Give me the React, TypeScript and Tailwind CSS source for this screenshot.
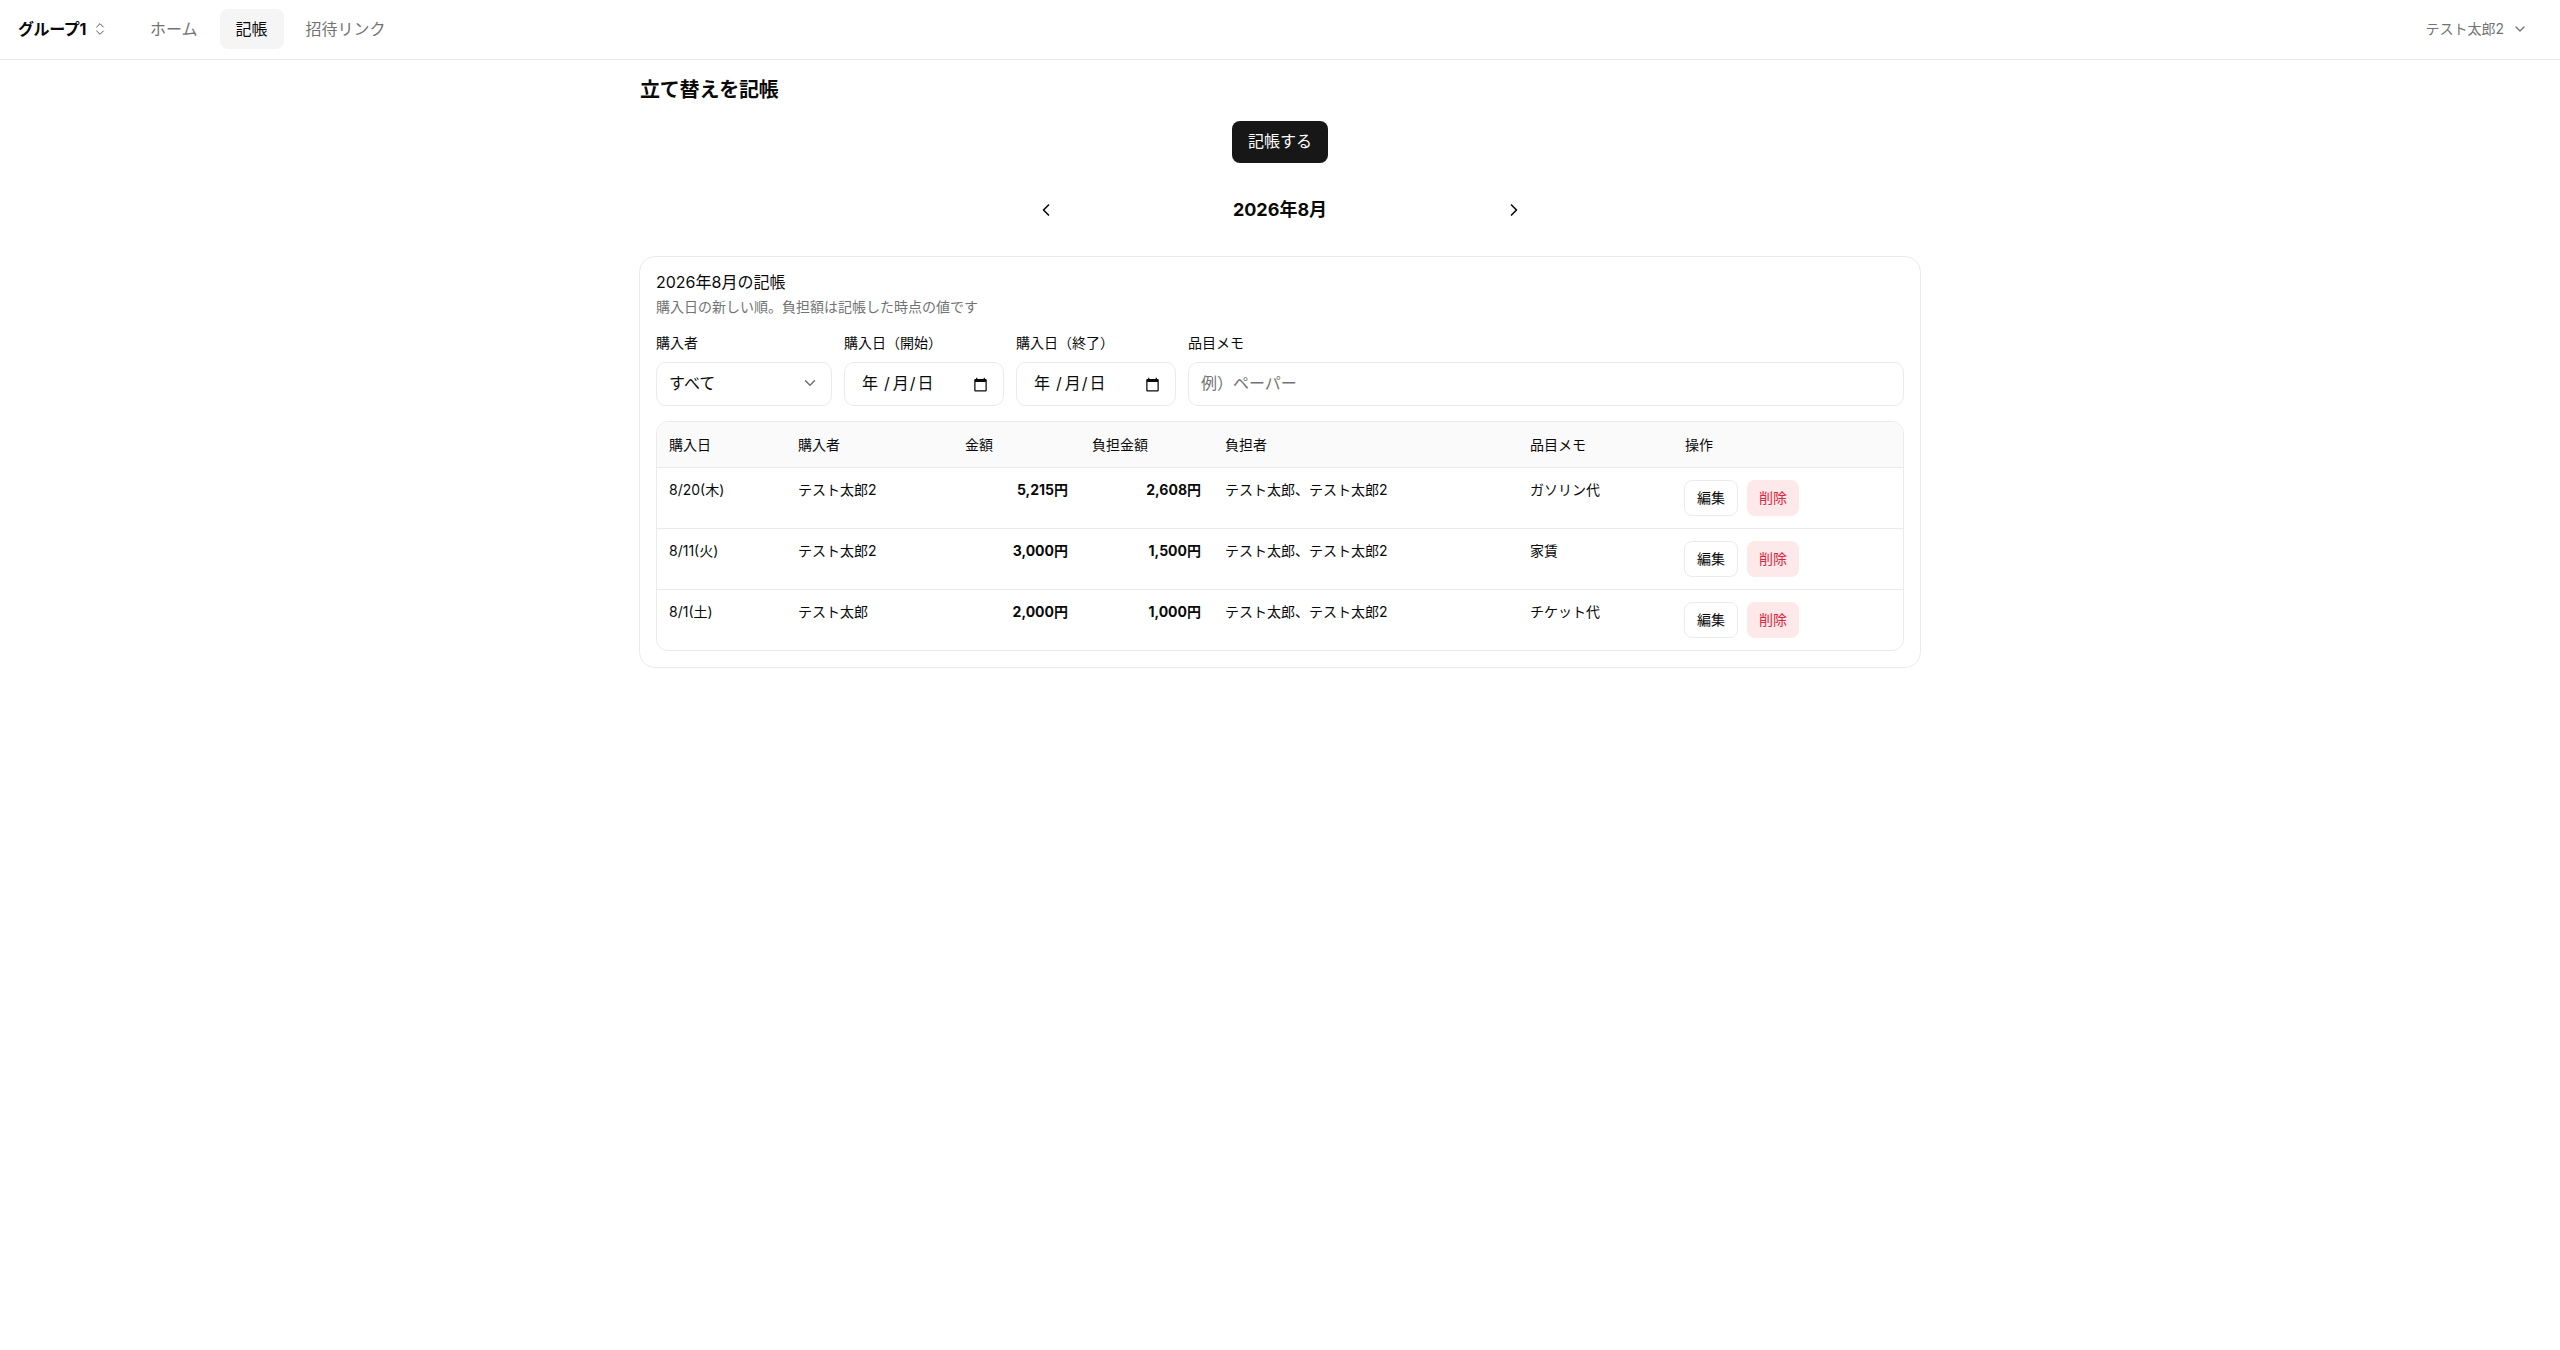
import { ChevronDown, ChevronLeft, ChevronRight, ChevronsUpDown } from 'lucide-react';

const rows = [
  { date: '8/20(木)', buyer: 'テスト太郎2', amount: '5,215円', share: '2,608円', payers: 'テスト太郎、テスト太郎2', memo: 'ガソリン代' },
  { date: '8/11(火)', buyer: 'テスト太郎2', amount: '3,000円', share: '1,500円', payers: 'テスト太郎、テスト太郎2', memo: '家賃' },
  { date: '8/1(土)', buyer: 'テスト太郎', amount: '2,000円', share: '1,000円', payers: 'テスト太郎、テスト太郎2', memo: 'チケット代' },
];

// same shape as the browser's native date picker icon
function CalendarIcon() {
  return (
    <svg width="15" height="15" viewBox="0 0 24 24" fill="currentColor">
      <path d="M20 3h-1V1h-2v2H7V1H5v2H4c-1.1 0-2 .9-2 2v16c0 1.1.9 2 2 2h16c1.1 0 2-.9 2-2V5c0-1.1-.9-2-2-2zm0 18H4V8h16v13z" />
    </svg>
  );
}

function DateBox({ label }: { label: string }) {
  return (
    <div className="flex flex-col gap-[10px] w-40">
      <div className="text-sm leading-[18px]">{label}</div>
      <div className="h-11 pl-[17px] pr-[15px] border border-[#ebebeb] rounded-[10px] flex items-center justify-between text-base">
        <div className="flex items-center pb-[2px]">
          <span>年</span>
          <span className="ml-[6px]">/</span>
          <span className="ml-[3px]">月</span>
          <span className="ml-[1px]">/</span>
          <span className="ml-[2px]">日</span>
        </div>
        <CalendarIcon />
      </div>
    </div>
  );
}

export default function App() {
  return (
    <div className="min-h-[1350px] bg-white text-[#0a0a0a] font-['Inter','Noto_Sans_CJK_JP',sans-serif]">
      <header className="h-[60px] pb-[2px] border-b border-[#e8e8e8] flex items-center justify-between pl-[18px] pr-[32px]">
        <div className="flex items-center">
          <div className="flex items-center gap-[6px] text-base font-bold tracking-[-0.4px] w-[116px]">
            グループ1 <ChevronsUpDown size={16} strokeWidth={1.5} className="text-[#525252]" />
          </div>
          <nav className="flex items-center gap-[6px] text-base text-[#737373]">
            <div className="px-4 h-10 flex items-center">ホーム</div>
            <div className="px-4 h-10 flex items-center bg-[#f5f5f5] rounded-lg text-[#0a0a0a]">記帳</div>
            <div className="px-4 h-10 flex items-center">招待リンク</div>
          </nav>
        </div>
        <div className="flex items-center gap-2 text-sm text-[#737373]">
          テスト太郎2 <ChevronDown size={16} />
        </div>
      </header>

      <main className="w-[1282px] mx-auto">
        <h1 className="text-xl font-bold mt-[16px] ml-px leading-7 tracking-[-0.2px]">立て替えを記帳</h1>
        <div className="flex justify-center mt-[17px]">
          <button className="h-[42px] w-24 bg-[#171717] text-white rounded-lg text-base pb-[2px]">記帳する</button>
        </div>
        <div className="flex items-center justify-between w-[496px] mx-auto mt-[27px] h-10 px-1">
          <ChevronLeft size={20} />
          <div className="text-lg font-bold">2026年8月</div>
          <ChevronRight size={20} />
        </div>
        <section className="mt-[26px] border border-[#ebebeb] rounded-2xl pt-[13px] px-4 pb-4">
          <div className="text-base leading-[25px]">2026年8月の記帳</div>
          <div className="text-sm text-[#737373] leading-6">購入日の新しい順。負担額は記帳した時点の値です</div>
          <div className="flex gap-3 mt-[15px]">
            <div className="flex flex-col gap-[10px] w-44">
              <div className="text-sm leading-[18px]">購入者</div>
              <div className="h-11 px-3 pb-[2px] border border-[#ebebeb] rounded-[10px] flex items-center justify-between text-base">
                すべて <ChevronDown size={18} className="text-[#737373]" />
              </div>
            </div>
            <DateBox label="購入日（開始）" />
            <DateBox label="購入日（終了）" />
            <div className="flex flex-col gap-[10px] flex-1">
              <div className="text-sm leading-[18px]">品目メモ</div>
              <div className="h-11 px-3 pb-[2px] border border-[#ebebeb] rounded-[10px] flex items-center text-base text-[#737373]">例）ペーパー</div>
            </div>
          </div>
          <div className="mt-[15px] border border-[#ebebeb] rounded-xl overflow-hidden text-sm">
            <div className="grid grid-cols-[129px_167px_127px_133px_305px_155px_1fr] items-center h-[45px] bg-[#fafafa]">
              <div className="px-3">購入日</div>
              <div className="px-3">購入者</div>
              <div className="px-3">金額</div>
              <div className="px-3">負担金額</div>
              <div className="px-3">負担者</div>
              <div className="px-3">品目メモ</div>
              <div className="px-3">操作</div>
            </div>
            {rows.map((r) => (
              <div key={r.date} className="grid grid-cols-[129px_167px_127px_133px_305px_155px_1fr] h-[61px] border-t border-[#ebebeb]">
                <div className="px-3 pt-3">{r.date}</div>
                <div className="px-3 pt-3">{r.buyer}</div>
                <div className="px-3 pt-3 text-right font-bold">{r.amount}</div>
                <div className="px-3 pt-3 text-right font-bold">{r.share}</div>
                <div className="px-3 pt-3">{r.payers}</div>
                <div className="px-3 pt-3">{r.memo}</div>
                <div className="pl-[11px] pt-3 flex gap-[9px] items-start">
                  <button className="h-9 px-3 border border-[#ebebeb] rounded-lg">編集</button>
                  <button className="h-9 px-3 bg-[#fde8ea] text-[#dc2640] rounded-lg">削除</button>
                </div>
              </div>
            ))}
          </div>
        </section>
      </main>
    </div>
  );
}
